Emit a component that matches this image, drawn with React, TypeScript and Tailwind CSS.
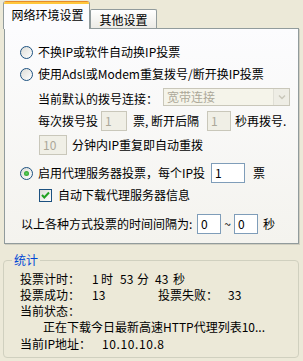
import React from "react";

const Radio = ({ checked }: { checked?: boolean }) => (
  <span className="inline-flex w-[13px] h-[13px] shrink-0 rounded-full border border-[#1c5180] bg-linear-to-br from-[#dcdcd7] to-white items-center justify-center">
    {checked && (
      <span className="w-[5px] h-[5px] rounded-full bg-radial from-[#5ed35e] to-[#1a901a]" />
    )}
  </span>
);

const Check = () => (
  <span className="inline-flex w-[13px] h-[13px] shrink-0 border border-[#1c5180] bg-linear-to-br from-[#dcdcd7] to-white items-center justify-center">
    <svg width="11" height="11" viewBox="0 0 11 11">
      <path d="M2 5 L4.3 7.5 L9 2.5" fill="none" stroke="#21a121" strokeWidth="2" />
    </svg>
  </span>
);

const Input = ({ value, w, disabled }: { value: string; w: string; disabled?: boolean }) => (
  <span
    className={
      "inline-flex h-[20px] shrink-0 items-center pl-[3px] border " +
      w +
      " " +
      (disabled
        ? "border-[#c9c7ba] bg-[#f0efe6] text-[#aca899]"
        : "border-[#7f9db9] bg-white text-black")
    }
  >
    {value}
  </span>
);

export default function App() {
  return (
    <div
      className="w-[303px] h-[361px] bg-[#ece9d8] overflow-hidden text-[12px] leading-[16px] text-black pt-[1px]"
      style={{ fontFamily: '"Noto Sans CJK SC", "Noto Sans", sans-serif' }}
    >
      {/* tabs */}
      <div className="flex items-end h-[27px] pl-[3px]">
        <div className="relative z-10 -mb-px h-[28px] w-[87px] flex flex-col bg-[#fcfcfe] border-x border-[#919b9c] rounded-t-[3px] overflow-hidden">
          <div className="h-[1px] bg-[#e68b2c]" />
          <div className="h-[2px] bg-[#ffc73c]" />
          <div className="flex-1 flex items-center justify-center pl-[2px] pb-[3px]">网络环境设置</div>
        </div>
        <div className="h-[19px] w-[67px] flex items-center justify-center pt-[2px] bg-linear-to-b from-white to-[#ecebe6] border border-b-0 border-[#919b9c] rounded-t-[2px]">
          其他设置
        </div>
      </div>

      {/* panel */}
      <div className="ml-[4px] w-[295px] h-[216px] border border-[#919b9c] bg-linear-to-b from-[#fcfcfe] to-[#f4f3ee] shadow-[1px_1px_0_#d0cec0] pt-[12px]">
        <div className="flex items-center h-[22px] pl-[15px] gap-[5px]">
          <Radio />
          <span>不换IP或软件自动换IP投票</span>
        </div>
        <div className="flex items-center h-[22px] pl-[15px] gap-[5px]">
          <Radio />
          <span>使用Adsl或Modem重复拨号/断开换IP投票</span>
        </div>
        <div className="flex items-center h-[24px] pl-[33px]">
          <span className="w-[125px] pt-[3px]">当前默认的拨号连接：</span>
          <span className="flex w-[127px] h-[18px] border border-[#c9c7ba] bg-[#f5f4ea]">
            <span className="flex-1 pl-[3px] text-[#aca899] leading-[16px]">宽带连接</span>
            <span className="w-[16px] flex items-center justify-center bg-[#eeede5] border-l border-[#e0dfd6]">
              <svg width="8" height="6" viewBox="0 0 8 6">
                <path d="M1 1.5 L4 4.5 L7 1.5" fill="none" stroke="#c9c7ba" strokeWidth="1.5" />
              </svg>
            </span>
          </span>
        </div>
        <div className="flex items-center h-[24px] pl-[33px]">
          <span className="w-[63px]">每次拨号投</span>
          <Input value="1" w="w-[26px]" disabled />
          <span className="ml-[6px] w-[74px]">票, 断开后隔</span>
          <Input value="1" w="w-[24px]" disabled />
          <span className="ml-[4px]">秒再拨号.</span>
        </div>
        <div className="flex items-center h-[24px] pl-[34px]">
          <Input value="10" w="w-[28px]" disabled />
          <span className="ml-[5px]">分钟内IP重复即自动重拨</span>
        </div>
        <div className="flex items-center h-[24px] pl-[15px] mt-[4px]">
          <Radio checked />
          <span className="ml-[5px] w-[173px]">启用代理服务器投票，每个IP投</span>
          <Input value="1" w="w-[34px]" />
          <span className="ml-[8px]">票</span>
        </div>
        <div className="flex items-center h-[20px] pl-[34px]">
          <Check />
          <span className="ml-[6px]">自动下载代理服务器信息</span>
        </div>
        <div className="flex items-center h-[24px] pl-[16px] mt-[7px]">
          <span className="w-[176px]">以上各种方式投票的时间间隔为:</span>
          <Input value="0" w="w-[24px]" />
          <span className="w-[13px] text-center">~</span>
          <Input value="0" w="w-[24px]" />
          <span className="ml-[5px]">秒</span>
        </div>
      </div>

      {/* groupbox */}
      <div className="relative ml-[3px] mt-[16px] w-[296px] h-[98px] border border-[#d0d0bf] rounded-[4px] pt-[10px] pl-[16px]">
        <span className="absolute -top-[9px] left-[8px] px-[2px] bg-[#ece9d8] text-[#0046d5] leading-[16px]">统计</span>
        <div className="flex h-[16px] items-center">
          <span className="w-[72px]">投票计时：</span>
          <span className="w-[9px]">1</span>
          <span className="w-[19px]">时</span>
          <span className="w-[17px]">53</span>
          <span className="w-[18px]">分</span>
          <span className="w-[18px]">43</span>
          <span>秒</span>
        </div>
        <div className="flex h-[16px] items-center">
          <span className="w-[72px]">投票成功：</span>
          <span className="w-[66px]">13</span>
          <span className="w-[70px]">投票失败：</span>
          <span>33</span>
        </div>
        <div className="flex h-[16px] items-center">
          <span>当前状态：</span>
        </div>
        <div className="flex h-[16px] items-center pl-[23px]">
          <span>正在下载今日最新高速HTTP代理列表10...</span>
        </div>
        <div className="flex h-[17px] items-end">
          <span className="w-[82px]">当前IP地址：</span>
          <span className="tracking-[0.6px]">10.10.10.8</span>
        </div>
      </div>
    </div>
  );
}
